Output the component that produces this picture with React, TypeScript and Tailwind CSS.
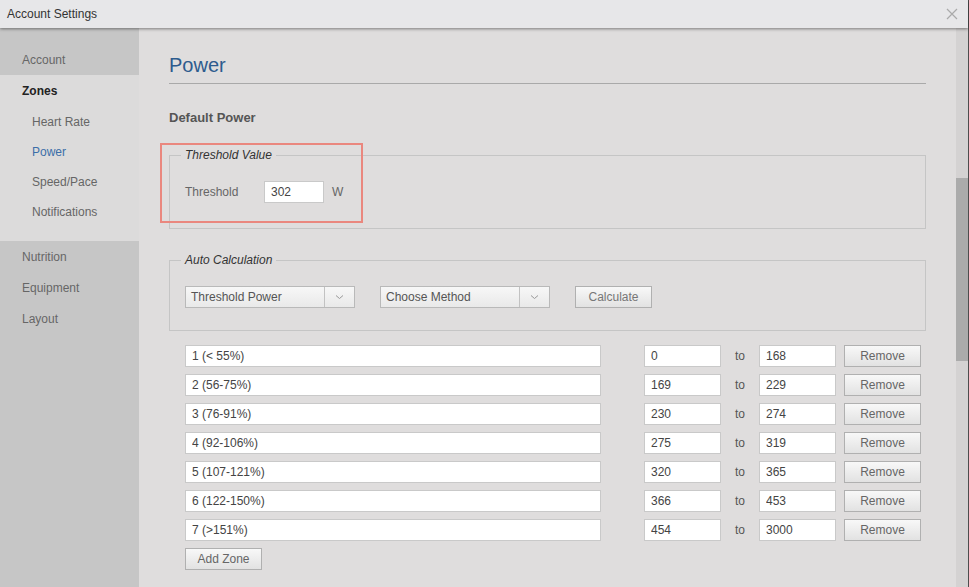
import React from 'react';

const zones = [
  { name: '1 (< 55%)', from: '0', to: '168' },
  { name: '2 (56-75%)', from: '169', to: '229' },
  { name: '3 (76-91%)', from: '230', to: '274' },
  { name: '4 (92-106%)', from: '275', to: '319' },
  { name: '5 (107-121%)', from: '320', to: '365' },
  { name: '6 (122-150%)', from: '366', to: '453' },
  { name: '7 (>151%)', from: '454', to: '3000' },
];

function TextBox({ value, className = '' }: { value: string; className?: string }) {
  return (
    <input
      readOnly
      defaultValue={value}
      className={`h-[22px] bg-white border border-[#c9c9c9] pl-[6px] text-[12px] text-[#444] outline-none ${className}`}
    />
  );
}

function Button({ label, className = '' }: { label: string; className?: string }) {
  return (
    <div
      className={`h-[22px] flex items-center justify-center border border-[#b0b0b0] bg-gradient-to-b from-[#f8f8f8] to-[#e2e2e2] text-[12px] text-[#666] ${className}`}
    >
      {label}
    </div>
  );
}

function Select({ label }: { label: string }) {
  return (
    <div className="w-[170px] h-[22px] flex border border-[#b9b9b9] bg-gradient-to-b from-[#f7f7f7] to-[#e9e9e9]">
      <div className="flex-1 flex items-center pl-[5px] text-[12px] text-[#555]">{label}</div>
      <div className="w-[30px] border-l border-[#c2c2c2] flex items-center justify-center">
        <svg width="9" height="6" viewBox="0 0 9 6">
          <path d="M1 1.5 L4.5 4.5 L8 1.5" fill="none" stroke="#999" strokeWidth="1" />
        </svg>
      </div>
    </div>
  );
}

function SideItem({ label, active, bold, sub }: { label: string; active?: boolean; bold?: boolean; sub?: boolean }) {
  return (
    <div
      className={`flex items-center ${sub ? 'h-[30px] pl-[32px]' : bold ? 'h-[32px] pl-[22px]' : 'h-[31px] pl-[22px]'} text-[12px] ${
        bold ? 'font-bold text-[#222]' : active ? 'text-[#3b6ea8]' : 'text-[#666]'
      }`}
    >
      {label}
    </div>
  );
}

export default function App() {
  return (
    <div className="w-full h-[587px] flex overflow-hidden font-['Liberation_Sans',Arial,sans-serif]">
      <div className="flex-1 flex flex-col">
        <div className="h-[28px] shrink-0 relative z-10 bg-[#e7e7e9] flex items-center justify-between pl-[7px] pr-[10px] shadow-[0_1px_3px_rgba(0,0,0,0.45)]">
          <span className="text-[12px] text-[#333]">Account Settings</span>
          <svg width="12" height="12" viewBox="0 0 12 12">
            <path d="M1 1 L11 11 M11 1 L1 11" stroke="#aaa" strokeWidth="1.2" fill="none" />
          </svg>
        </div>

        <div className="flex-1 flex min-h-0">
          {/* sidebar */}
          <div className="w-[139px] shrink-0 bg-[#c6c6c6] pt-[16px]">
            <SideItem label="Account" />
            <div className="bg-[#dcdbdb] pb-[14px]">
              <SideItem label="Zones" bold />
              <SideItem label="Heart Rate" sub />
              <SideItem label="Power" sub active />
              <SideItem label="Speed/Pace" sub />
              <SideItem label="Notifications" sub />
            </div>
            <SideItem label="Nutrition" />
            <SideItem label="Equipment" />
            <SideItem label="Layout" />
          </div>

          {/* main */}
          <div className="flex-1 relative bg-[#dfdddd] px-[30px] pt-[25px]">
            <h1 className="text-[20px] leading-[24px] text-[#2d5b8e] pb-[6px] border-b border-[#a9a9a9]">Power</h1>
            <h2 className="mt-[26px] text-[13px] leading-[16px] font-bold text-[#555]">Default Power</h2>

            <fieldset className="mt-[22px] border border-[#c5c5c5] px-[12px] pt-[19px] pb-[25px]">
              <legend className="px-[4px] -ml-[1px] text-[12px] leading-[14px] italic text-[#333]">Threshold Value</legend>
              <div className="pl-[3px] flex items-center text-[12px] text-[#666]">
                <span className="w-[79px]">Threshold</span>
                <TextBox value="302" className="w-[60px]" />
                <span className="ml-[8px]">W</span>
              </div>
            </fieldset>

            <fieldset className="mt-[24px] border border-[#c5c5c5] px-[12px] pt-[19px] pb-[22px]">
              <legend className="px-[4px] -ml-[1px] text-[12px] leading-[14px] italic text-[#333]">Auto Calculation</legend>
              <div className="pl-[3px] flex items-center gap-[25px]">
                <Select label="Threshold Power" />
                <Select label="Choose Method" />
                <Button label="Calculate" className="w-[77px] text-[#777]" />
              </div>
            </fieldset>

            <div className="mt-[14px] pl-[16px] flex flex-col gap-[7px]">
              {zones.map((z) => (
                <div key={z.name} className="flex items-center">
                  <TextBox value={z.name} className="w-[416px]" />
                  <TextBox value={z.from} className="ml-[43px] w-[77px]" />
                  <span className="w-[38px] pl-[14px] text-[12px] text-[#555]">to</span>
                  <TextBox value={z.to} className="w-[77px]" />
                  <Button label="Remove" className="ml-[8px] w-[77px]" />
                </div>
              ))}
              <Button label="Add Zone" className="w-[77px]" />
            </div>

            <div className="absolute left-[21px] top-[115px] w-[203px] h-[80px] border-2 border-[#ea877e] pointer-events-none" />
          </div>

          {/* scrollbar */}
          <div className="w-[12px] shrink-0 bg-[#d4d2d2] pt-[150px]">
            <div className="h-[183px] bg-[#ababab]" />
          </div>
        </div>
      </div>
      <div className="w-[1px] shrink-0 bg-[#4d4d4d]" />
    </div>
  );
}
